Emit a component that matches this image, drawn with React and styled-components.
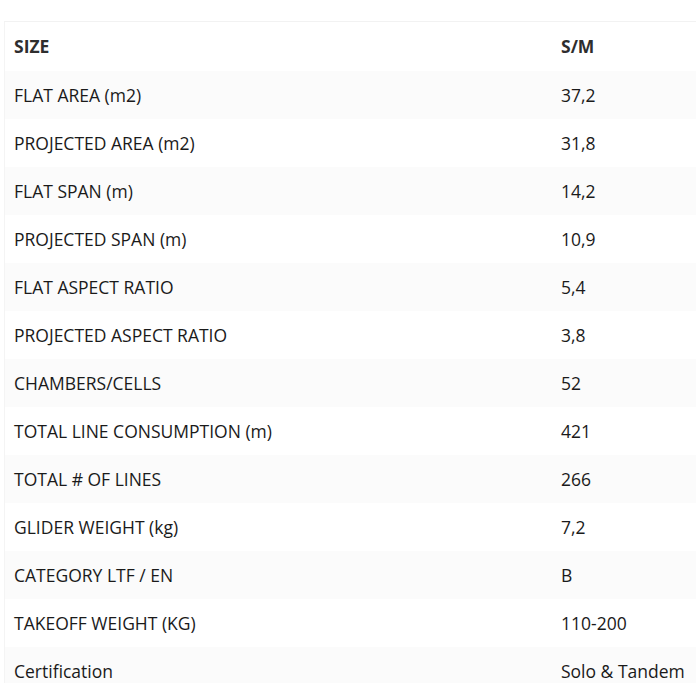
import React from 'react';
import styled, { createGlobalStyle } from 'styled-components';

const Global = createGlobalStyle`
  body {
    margin: 0;
    background: #fff;
    font-family: 'Open Sans', 'Liberation Sans', sans-serif;
  }
`;

const Pagina = styled.div`
  padding: 21px 4px 0 4px;
  height: 662px;
  overflow: hidden;
`;

const Tabela = styled.table`
  width: 692px;
  border-collapse: collapse;
  border-top: 1px solid #f2f2f2;
  border-left: 1px solid #f4f4f4;
  font-size: 17.5px;
  color: #1a1a1a;
`;

const Linha = styled.tr`
  height: 48px;
  background: ${props => (props.listrada ? '#fbfbfb' : '#fff')};
`;

const Celula = styled.td`
  padding: 0 0 0 9px;
  vertical-align: middle;
  line-height: 20px;
  font-weight: ${props => (props.negrito ? 700 : 400)};
  color: ${props => (props.negrito ? '#2e2e2e' : '#1a1a1a')};
  width: ${props => props.largura || 'auto'};
`;

const linhas = [
  ['FLAT AREA (m2)', '37,2'],
  ['PROJECTED AREA (m2)', '31,8'],
  ['FLAT SPAN (m)', '14,2'],
  ['PROJECTED SPAN (m)', '10,9'],
  ['FLAT ASPECT RATIO', '5,4'],
  ['PROJECTED ASPECT RATIO', '3,8'],
  ['CHAMBERS/CELLS', '52'],
  ['TOTAL LINE CONSUMPTION (m)', '421'],
  ['TOTAL # OF LINES', '266'],
  ['GLIDER WEIGHT (kg)', '7,2'],
  ['CATEGORY LTF / EN', 'B'],
  ['TAKEOFF WEIGHT (KG)', '110-200'],
  ['Certification', 'Solo & Tandem'],
];

const App = () => (
  <Pagina>
    <Global />
    <Tabela>
      <tbody>
        <Linha style={{ height: 49 }}>
          <Celula negrito largura="538px">SIZE</Celula>
          <Celula negrito>S/M</Celula>
        </Linha>
        {linhas.map(([nome, valor], i) => (
          <Linha key={nome} listrada={i % 2 === 0}>
            <Celula>{nome}</Celula>
            <Celula>{valor}</Celula>
          </Linha>
        ))}
      </tbody>
    </Tabela>
  </Pagina>
);

export default App;
